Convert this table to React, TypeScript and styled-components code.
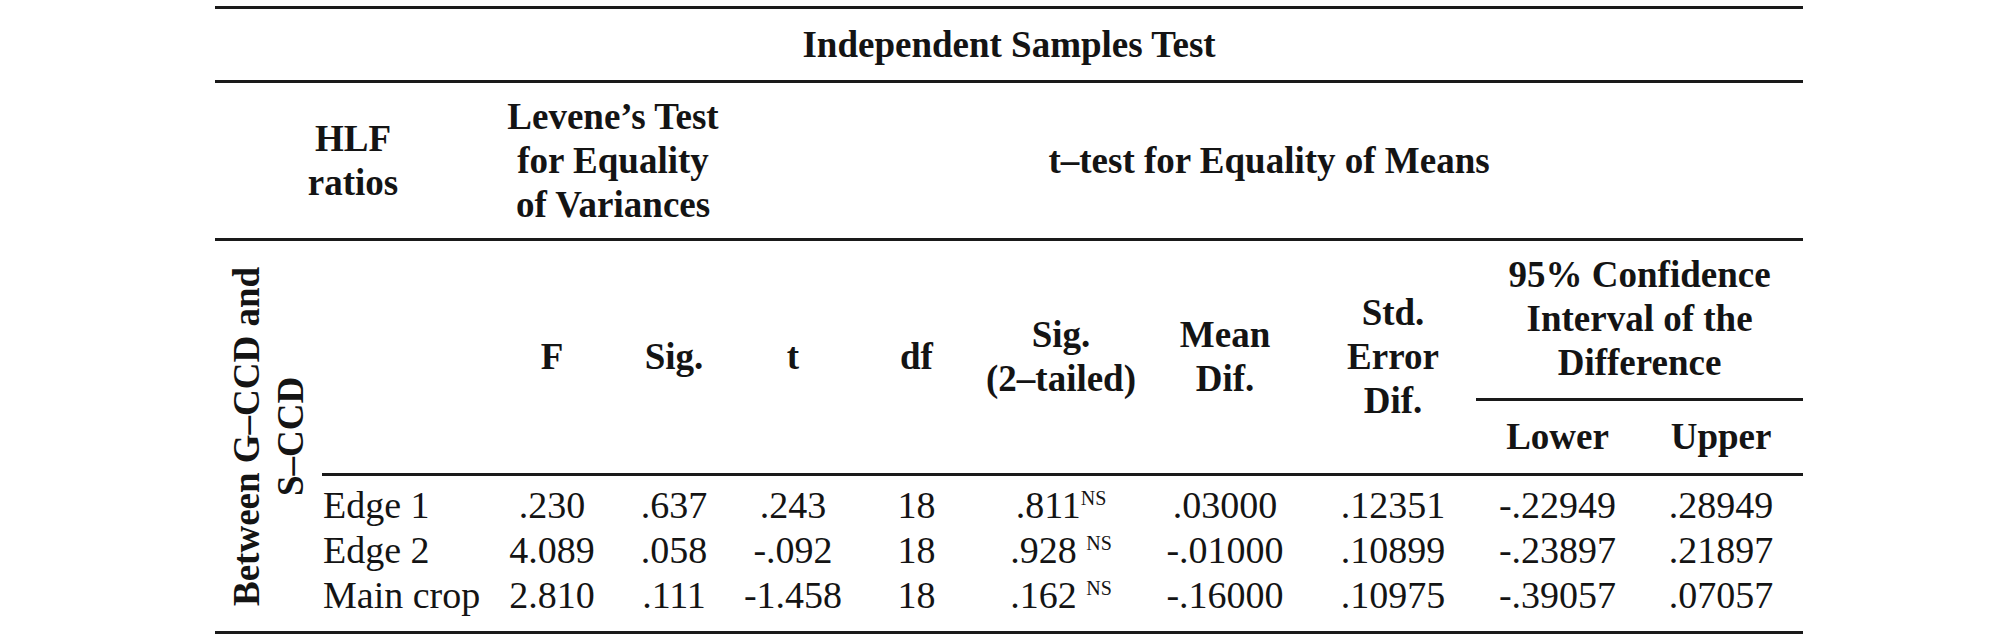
import React from "react";
import styled, { createGlobalStyle } from "styled-components";

const Global = createGlobalStyle`
  html, body { margin: 0; padding: 0; background: #ffffff; }
  body { font-family: "Liberation Serif", "Times New Roman", serif; color: #141414; }
`;

const Page = styled.div`
  padding: 6px 0 0 215px;
`;

const Table = styled.table`
  border-collapse: collapse;
  table-layout: fixed;
  width: 1588px;
  font-family: "Liberation Serif", "Times New Roman", serif;
  font-size: 37px;
  color: #141414;
  border-top: 3px solid #1a1a1a;
  border-bottom: 3px solid #1a1a1a;
`;

const HeadCell = styled.th<{ $rule?: boolean; $pad?: string }>`
  font-weight: 700;
  line-height: 44px;
  text-align: center;
  vertical-align: middle;
  white-space: nowrap;
  padding: ${(p) => p.$pad ?? "0"};
  border-bottom: ${(p) => (p.$rule ? "3px solid #1a1a1a" : "none")};
`;

const SideCell = styled.th`
  font-weight: 700;
  line-height: 44px;
  padding: 0;
  vertical-align: middle;
  text-align: center;
`;

const SideLabel = styled.div`
  writing-mode: vertical-rl;
  transform: rotate(180deg);
  height: 360px;
  margin: 0 auto;
  text-align: center;
  white-space: nowrap;
`;

const DataCell = styled.td<{ $first?: boolean; $last?: boolean; $label?: boolean }>`
  font-weight: 400;
  font-size: 38px;
  line-height: 45px;
  white-space: nowrap;
  text-align: ${(p) => (p.$label ? "left" : "center")};
  padding: ${(p) => (p.$first ? "7px" : "0")} 0 ${(p) => (p.$last ? "13px" : "0")}
    ${(p) => (p.$label ? "1px" : "0")};
  border-bottom: ${(p) => (p.$last ? "3px solid #1a1a1a" : "none")};
`;

const Sup = styled.span`
  font-size: 20px;
  line-height: 0;
  vertical-align: 13px;
`;

const widths = [107, 169, 122, 122, 116, 131, 158, 170, 166, 163, 164];

type Row = {
  label: string;
  f: string;
  sig: string;
  t: string;
  df: string;
  sig2: string;
  gap: boolean;
  mean: string;
  se: string;
  lower: string;
  upper: string;
};

const rows: Row[] = [
  { label: "Edge 1", f: ".230", sig: ".637", t: ".243", df: "18", sig2: ".811", gap: false, mean: ".03000", se: ".12351", lower: "-.22949", upper: ".28949" },
  { label: "Edge 2", f: "4.089", sig: ".058", t: "-.092", df: "18", sig2: ".928", gap: true, mean: "-.01000", se: ".10899", lower: "-.23897", upper: ".21897" },
  { label: "Main crop", f: "2.810", sig: ".111", t: "-1.458", df: "18", sig2: ".162", gap: true, mean: "-.16000", se: ".10975", lower: "-.39057", upper: ".07057" },
];

export default function App() {
  return (
    <>
      <Global />
      <Page>
        <Table>
          <colgroup>
            {widths.map((w, i) => (
              <col key={i} style={{ width: w }} />
            ))}
          </colgroup>
          <tbody>
            <tr>
              <HeadCell colSpan={11} $rule $pad="14px 0 13px">
                Independent Samples Test
              </HeadCell>
            </tr>
            <tr>
              <HeadCell colSpan={2} $rule $pad="12px 0 11px 0">
                HLF
                <br />
                ratios
              </HeadCell>
              <HeadCell colSpan={2} $rule $pad="12px 0 11px 0">
                Levene’s Test
                <br />
                for Equality
                <br />
                of Variances
              </HeadCell>
              <HeadCell colSpan={7} $rule $pad="12px 0 11px 0">
                t–test for Equality of Means
              </HeadCell>
            </tr>
            <tr>
              <SideCell rowSpan={5}>
                <SideLabel>
                  Between G–CCD and
                  <br />
                  S–CCD
                </SideLabel>
              </SideCell>
              <HeadCell rowSpan={2} $rule />
              <HeadCell rowSpan={2} $rule>F</HeadCell>
              <HeadCell rowSpan={2} $rule>Sig.</HeadCell>
              <HeadCell rowSpan={2} $rule>t</HeadCell>
              <HeadCell rowSpan={2} $rule>df</HeadCell>
              <HeadCell rowSpan={2} $rule>
                Sig.
                <br />
                (2–tailed)
              </HeadCell>
              <HeadCell rowSpan={2} $rule>
                Mean
                <br />
                Dif.
              </HeadCell>
              <HeadCell rowSpan={2} $rule>
                Std.
                <br />
                Error
                <br />
                Dif.
              </HeadCell>
              <HeadCell colSpan={2} $rule $pad="12px 0 13px">
                95% Confidence
                <br />
                Interval of the
                <br />
                Difference
              </HeadCell>
            </tr>
            <tr>
              <HeadCell $rule $pad="14px 0 14px">Lower</HeadCell>
              <HeadCell $rule $pad="14px 0 14px">Upper</HeadCell>
            </tr>
            {rows.map((r, i) => {
              const first = i === 0;
              const last = i === rows.length - 1;
              return (
                <tr key={r.label}>
                  <DataCell $first={first} $last={last} $label>{r.label}</DataCell>
                  <DataCell $first={first} $last={last}>{r.f}</DataCell>
                  <DataCell $first={first} $last={last}>{r.sig}</DataCell>
                  <DataCell $first={first} $last={last}>{r.t}</DataCell>
                  <DataCell $first={first} $last={last}>{r.df}</DataCell>
                  <DataCell $first={first} $last={last}>
                    {r.sig2}
                    {r.gap ? " " : ""}
                    <Sup>NS</Sup>
                  </DataCell>
                  <DataCell $first={first} $last={last}>{r.mean}</DataCell>
                  <DataCell $first={first} $last={last}>{r.se}</DataCell>
                  <DataCell $first={first} $last={last}>{r.lower}</DataCell>
                  <DataCell $first={first} $last={last}>{r.upper}</DataCell>
                </tr>
              );
            })}
          </tbody>
        </Table>
      </Page>
    </>
  );
}
